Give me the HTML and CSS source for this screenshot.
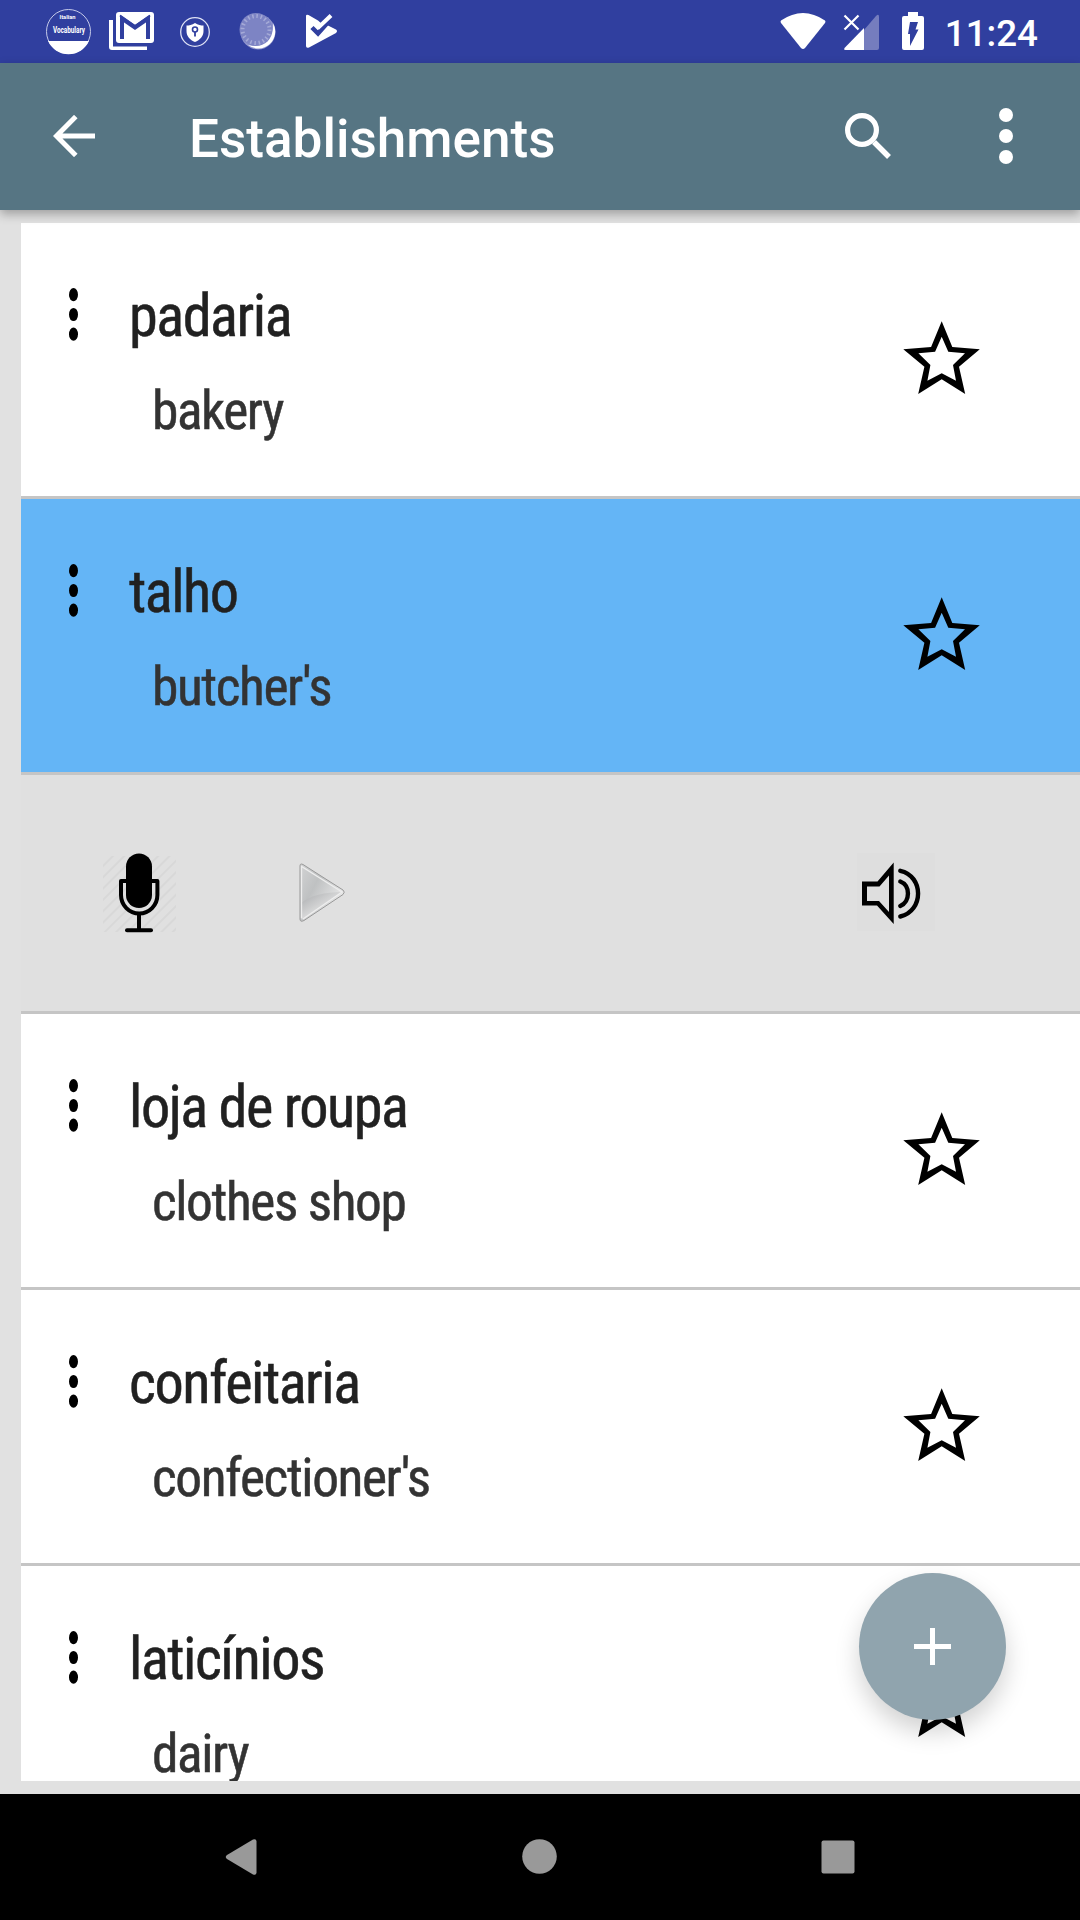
FILE: index.html
```html
<!DOCTYPE html>
<html lang="pt">
<head>
  <meta charset="UTF-8" />
  <title>Establishments</title>
  <link rel="stylesheet" href="styles.css">
</head>
<body>

  <div class="status-bar">
    <svg class="notifications" width="340" height="63" viewBox="0 0 340 63">
      <!-- vocabulary app -->
      <circle cx="68.5" cy="31.5" r="22" fill="none" stroke="#c5cae9" stroke-width="1"/>
      <path d="M48 41 H89 A22.500 22.500 0 0 1 48 41 Z" fill="#fff"/>
      <text class="tiny" x="67.500" y="19" textLength="16" lengthAdjust="spacingAndGlyphs" font-size="6">Italian</text>
      <text class="tiny" x="69" y="32.500" textLength="32" lengthAdjust="spacingAndGlyphs" font-size="8.500">Vocabulary</text>
      <!-- mail -->
      <path d="M109 20 h4 v26.500 h34 v3.500 h-35 q-3 0 -3-3 Z" fill="#fff"/>
      <rect x="116" y="12" width="38" height="31" rx="3" fill="#fff"/>
      <path d="M122 39 V18.500 L135 27.500 L148 18.500 V39" fill="none" stroke="#303f9f" stroke-width="4"/>
      <path d="M120 15.500 L135 26 L150 15.500" fill="none" stroke="#303f9f" stroke-width="2"/>
      <!-- shield -->
      <circle cx="195" cy="32" r="14.300" fill="none" stroke="#dfe2f5" stroke-width="1.300"/>
      <path d="M195 23 C192 25 189 25.500 186.500 25.500 V31 C186.500 36.500 190 40 195 42 C200 40 203.500 36.500 203.500 31 V25.500 C201 25.500 198 25 195 23 Z" fill="#fff"/>
      <circle cx="195" cy="29.500" r="2.500" fill="none" stroke="#303f9f" stroke-width="1.600"/>
      <path d="M195 32 V36.500" stroke="#303f9f" stroke-width="1.800"/>
      <!-- sync -->
      <circle cx="258" cy="32" r="17.500" fill="#8f95cd"/>
      <path d="M273 23 A17 17 0 0 1 248 45 A20 20 0 0 0 273 23 Z" fill="#fff"/>
      <circle cx="256" cy="29.500" r="16.500" fill="#7d84c4"/>
      <circle cx="256" cy="29.500" r="13.500" fill="none" stroke="#a5aad7" stroke-width="4" stroke-dasharray="1.500 2.740"/>
      <!-- store -->
      <path d="M306 16 Q306 14 308.500 15 L318 20.500 L322 24 L327 25 L336 29.500 Q338 31 336 33 L309 47.500 Q306 48.500 306 46 Z" fill="#fff"/>
      <path d="M312 27.500 L318 33.500 L330 20" fill="none" stroke="#303f9f" stroke-width="4.500"/>
      <path d="M315 24 L319 27 L331 15.500" fill="none" stroke="#fff" stroke-width="4"/>
    </svg>
    <div class="system">
      <svg width="150" height="63" viewBox="780 0 150 63">
        <path d="M781 20.500 Q803 5.500 825 20.500 Q826 21.500 825 23 L805 48 Q803 50 801 48 L781 23 Q780 21.500 781 20.500 Z" fill="#fff"/>
        <path d="M864 30 L876 16 Q879 13 879 17 V48 Q879 50 877 50 H864 Z" fill="#757dbe"/>
        <path d="M864 28 V50 H845.500 Q843 50 845 47.500 Z" fill="#fff"/>
        <path d="M844.500 15.500 L858.500 29.500 M858.500 15.500 L844.500 29.500" stroke="#fff" stroke-width="2.200"/>
        <path d="M908 12 h10 v4 h4 q2 0 2 2 v30 q0 2 -2 2 h-18 q-2 0 -2-2 v-30 q0-2 2-2 h4 Z" fill="#fff"/>
        <path d="M910 22 h8 l-2.500 7.500 h3 l-8.500 16.500 v-12 h-2 Z" fill="#303f9f"/>
      </svg>
      <span class="clock">11:24</span>
    </div>
  </div>

  <header class="toolbar">
    <svg class="back" width="42" height="42" viewBox="0 0 42 42">
      <path d="M42 21 H4 M22.800 1.600 L3.500 21 L22.800 40.400" fill="none" stroke="#fff" stroke-width="5"/>
    </svg>
    <h1>Establishments</h1>
    <svg class="search" width="46" height="46" viewBox="0 0 46 46">
      <circle cx="17" cy="17" r="14.400" fill="none" stroke="#fff" stroke-width="5.200"/>
      <path d="M29 29 L44 44" stroke="#fff" stroke-width="5.500"/>
    </svg>
    <svg class="more" width="14" height="56" viewBox="0 0 14 56">
      <circle cx="7" cy="7" r="7"/><circle cx="7" cy="28" r="7"/><circle cx="7" cy="49" r="7"/>
    </svg>
  </header>

  <!-- shared icons -->
  <svg class="defs">
    <symbol id="dots" viewBox="0 0 10 54">
      <ellipse cx="5.500" cy="6.700" rx="4.500" ry="6.600"/>
      <ellipse cx="5.500" cy="26.500" rx="4.500" ry="6.600"/>
      <ellipse cx="5.500" cy="46.200" rx="4.500" ry="6.600"/>
    </symbol>
    <symbol id="star" viewBox="0 0 77 74">
      <path fill-rule="evenodd" d="M38.700 0.300 L49.300 26 L76.800 28.200 L56 45.700 L62.200 73 L38.700 58.300 L15.200 73 L21.400 45.700 L0.300 28.200 L28.100 26 Z M38.700 15.700 L45.300 30.700 L62 32.300 L50 44 L53 59.700 L38.700 52.300 L24.400 59.700 L27.400 44 L15.400 32.300 L32.100 30.700 Z"/>
    </symbol>
  </svg>

  <main class="word-list">
    <div class="row">
      <svg class="dots"><use href="#dots"/></svg>
      <div class="words"><p class="word">padaria</p><p class="meaning">bakery</p></div>
      <svg class="star"><use href="#star"/></svg>
    </div>
    <div class="row selected">
      <svg class="dots"><use href="#dots"/></svg>
      <div class="words"><p class="word">talho</p><p class="meaning">butcher's</p></div>
      <svg class="star"><use href="#star"/></svg>
    </div>
    <div class="player">
      <svg class="mic" width="80" height="84" viewBox="0 0 80 84">
        <defs>
          <pattern id="hatch" width="8" height="8" patternUnits="userSpaceOnUse" patternTransform="rotate(45)">
            <path d="M4 0 V8" stroke="#d6d6d6" stroke-width="1.500"/>
          </pattern>
        </defs>
        <rect x="3" y="4" width="73" height="76" fill="url(#hatch)"/>
        <rect x="26" y="1.500" width="26" height="54.500" rx="13"/>
        <path d="M27 29 H21 V43 A18.200 18.500 0 0 0 57.400 43 V29 H51" fill="none" stroke="#000" stroke-width="4" stroke-linejoin="round"/>
        <path d="M39 62 V77" stroke="#000" stroke-width="4"/>
        <path d="M27 78.300 H51" stroke="#000" stroke-width="4" stroke-linecap="round"/>
      </svg>
      <svg class="play" width="50" height="62" viewBox="0 0 50 62">
        <defs>
          <linearGradient id="metal" x1="0" y1="0" x2="1" y2="0.700">
            <stop offset="0" stop-color="#d2d3d4"/>
            <stop offset="0.400" stop-color="#bfc1c2"/>
            <stop offset="1" stop-color="#eeeeee"/>
          </linearGradient>
          <linearGradient id="shine" x1="0" y1="0" x2="0.700" y2="0.700">
            <stop offset="0" stop-color="#a8aaac"/>
            <stop offset="1" stop-color="#e8e8e8"/>
          </linearGradient>
        </defs>
        <path d="M3 4 Q3 1 6 2.500 L46 28 Q48.500 30 46 32.500 L7 58.500 Q3 60.500 3 57 Z" fill="url(#metal)"/>
        <path d="M4 41 Q18 30 46 30 L7 57 L4 57 Z" fill="url(#shine)"/>
        <path d="M3 4 Q3 1 6 2.500 L46 28 Q48.500 30 46 32.500 L7 58.500 Q3 60.500 3 57 Z" fill="none" stroke="#999" stroke-width="1"/>
        <path d="M4.500 56 V4.500 L45 30 L6 57" fill="none" stroke="#eee" stroke-width="1.300"/>
      </svg>
      <svg class="speaker" width="80" height="80" viewBox="0 0 80 80">
        <rect width="78" height="78" fill="#dedede"/>
        <path fill-rule="evenodd" d="M5 28.500 H20.500 L36.700 9.500 V71 L20 52.500 H5 Z M10 33.500 V48 H22 L32 59 V22.500 L22.500 33.500 Z"/>
        <path d="M43.300 17.800 C67 23 67 58 43.300 63.500 M43.300 28.500 C53.500 32 53.500 49 43.300 53" fill="none" stroke="#000" stroke-width="4.400" stroke-linecap="round"/>
      </svg>
    </div>
    <div class="row">
      <svg class="dots"><use href="#dots"/></svg>
      <div class="words"><p class="word">loja de roupa</p><p class="meaning">clothes shop</p></div>
      <svg class="star"><use href="#star"/></svg>
    </div>
    <div class="row">
      <svg class="dots"><use href="#dots"/></svg>
      <div class="words"><p class="word">confeitaria</p><p class="meaning">confectioner's</p></div>
      <svg class="star"><use href="#star"/></svg>
    </div>
    <div class="row">
      <svg class="dots"><use href="#dots"/></svg>
      <div class="words"><p class="word">laticínios</p><p class="meaning">dairy</p></div>
      <svg class="star"><use href="#star"/></svg>
    </div>
  </main>

  <button class="fab">
    <svg width="37" height="37" viewBox="0 0 37 37"><path d="M18.500 0 V37 M0 18.500 H37" stroke="#fff" stroke-width="5"/></svg>
  </button>

  <nav class="nav-bar">
    <svg width="36" height="36" viewBox="0 0 36 36"><path d="M4 16 L30 0.500 Q33.500 -0.500 33.500 2.500 V33.500 Q33.500 36.500 30 35.500 L4 20 Q1.500 18 4 16 Z"/></svg>
    <svg width="36" height="36" viewBox="0 0 36 36"><circle cx="17.500" cy="17.500" r="17.300"/></svg>
    <svg width="36" height="36" viewBox="0 0 36 36"><rect x="0.500" y="1.500" width="33" height="33" rx="2"/></svg>
  </nav>

</body>
</html>
```
FILE: styles.css
```css
body {
  font-family: Roboto, sans-serif;
  margin: 0;
  width: 1080px;
  height: 1920px;
  display: flex;
  flex-direction: column;
  overflow: hidden;
  background: #e1e1e1;
}
svg {
  display: block;
  flex: none;
}
.defs {
  display: none;
}

.status-bar {
  height: 63px;
  flex: none;
  display: flex;
  justify-content: space-between;
  background: #303f9f;
  color: white;
}
.tiny {
  fill: white;
  font-weight: 700;
  text-anchor: middle;
}
.system {
  display: flex;
  align-items: center;
  gap: 15px;
  padding-right: 42px;
}
.clock {
  font-size: 36.75px;
  font-weight: 500;
  line-height: 63px;
  padding-top: 3px;
}

.toolbar {
  height: 147px;
  flex: none;
  display: flex;
  align-items: center;
  background: #567583;
  color: white;
  box-shadow: 0 4px 10px rgba(0,0,0,0.3);
  z-index: 1;
}
.toolbar h1 {
  flex: 1;
  margin: 4px 0 0 94px;
  font-size: 53.1px;
  font-weight: 500;
}
.back {
  margin: 0 0 1px 53px;
}
.search {
  margin: 0 108px 1px 0;
}
.more {
  margin: 0 67px 1px 0;
  fill: white;
}

.word-list {
  height: 1558px;
  flex: none;
  margin: 13px 0 13px 21px;
  overflow: hidden;
  background: white;
}
.row {
  height: 273px;
  display: flex;
  align-items: flex-start;
  border-bottom: 3px solid #c5c5c5;
}
.selected {
  background: #64b5f6;
  background-clip: padding-box;
}
.dots {
  width: 10px;
  height: 54px;
  margin: 65px 0 0 47px;
}
.words {
  flex: 1;
  padding: 58px 0 0 51px;
  font-family: "Roboto Condensed", Roboto, sans-serif;
  font-stretch: 75%;
  -webkit-text-stroke: 0.5px;
}
.words p {
  margin: 0;
  white-space: nowrap;
}
.word {
  font-size: 58.3px;
  line-height: 70px;
  letter-spacing: -1.5px;
  color: #212121;
}
.meaning {
  font-size: 53.4px;
  line-height: 70px;
  letter-spacing: -1.4px;
  padding: 24.5px 0 0 23px;
  color: #333;
}
.star {
  width: 77px;
  height: 74px;
  margin: 98px 100px 0 0;
}

.player {
  height: 236px;
  display: flex;
  align-items: center;
  border-bottom: 3px solid #c5c5c5;
  background: #e0e0e0;
}
.mic {
  margin: 2px 0 0 79px;
}
.play {
  margin: 0 0 0 117px;
}
.speaker {
  margin: 0 143px 0 auto;
}

.fab {
  position: absolute;
  left: 859px;
  top: 1573px;
  width: 147px;
  height: 147px;
  display: flex;
  justify-content: center;
  align-items: center;
  border: none;
  border-radius: 50%;
  background: #90a4ae;
  box-shadow: 0 12px 24px rgba(0,0,0,0.18);
  z-index: 2;
}

.nav-bar {
  height: 126px;
  flex: none;
  display: flex;
  align-items: center;
  gap: 263px;
  padding-left: 223px;
  background: black;
  fill: #999;
}
```
